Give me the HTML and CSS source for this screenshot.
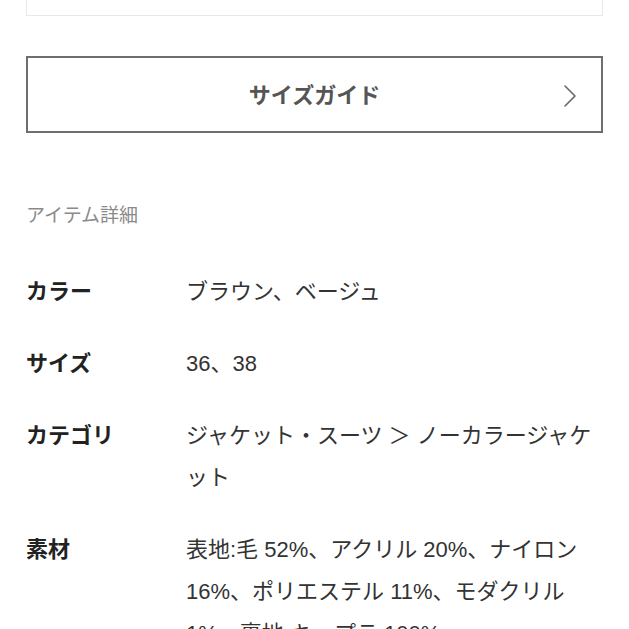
FILE: index.html
```html
<!DOCTYPE html>
<html lang="ja">
<head>
  <meta charset="UTF-8">
  <meta name="viewport" content="width=device-width, initial-scale=1.0">
  <title>アイテム詳細</title>
  <link rel="stylesheet" href="styles.css">
</head>
<body>
  <div class="page">
    <div class="card-end"></div>

    <button class="size-guide">
      <span class="size-guide-label">サイズガイド</span>
      <svg class="chevron" width="14" height="24" viewBox="0 0 14 24" fill="none">
        <path d="M2 2 L12 12 L2 22" stroke="#666" stroke-width="1.6" stroke-linecap="round" stroke-linejoin="round"/>
      </svg>
    </button>

    <h2 class="section-title">アイテム詳細</h2>

    <dl class="details">
      <div class="detail-row">
        <dt>カラー</dt>
        <dd>ブラウン、ベージュ</dd>
      </div>
      <div class="detail-row">
        <dt>サイズ</dt>
        <dd>36、38</dd>
      </div>
      <div class="detail-row">
        <dt>カテゴリ</dt>
        <dd>ジャケット・スーツ ＞ ノーカラージャケット</dd>
      </div>
      <div class="detail-row">
        <dt>素材</dt>
        <dd>表地:毛 52%、アクリル 20%、ナイロン 16%、ポリエステル 11%、モダクリル 1%、裏地:キュプラ 100%</dd>
      </div>
    </dl>
  </div>
</body>
</html>
```

FILE: styles.css
```css
body {
  margin: 0;
  background-color: #fff;
  font-family: "Liberation Sans", "Noto Sans CJK JP", sans-serif;
  color: #333;
}
.page {
  padding: 0 26px;
}
.card-end {
  height: 15px;
  border: 1px solid #e8e8e8;
  border-top: none;
}
.size-guide {
  display: flex;
  align-items: center;
  justify-content: center;
  position: relative;
  width: 100%;
  height: 77px;
  margin-top: 40px;
  padding: 0 0 3px;
  background-color: #fff;
  border: 2px solid #6e6e6e;
  font-family: inherit;
  cursor: pointer;
}
.size-guide-label {
  font-size: 22px;
  font-weight: 700;
  color: #555;
}
.chevron {
  position: absolute;
  right: 24px;
  top: 26px;
}
.section-title {
  margin: 70px 0 0;
  font-size: 19px;
  font-weight: 400;
  line-height: 26px;
  color: #8a8a8a;
}
.details {
  margin: 42px 0 0;
}
.detail-row {
  display: flex;
  margin-bottom: 30px;
}
.detail-row dt {
  width: 160px;
  flex-shrink: 0;
  font-size: 22px;
  font-weight: 700;
  line-height: 42px;
  color: #222;
}
.detail-row dd {
  flex: 1;
  margin: 0;
  font-size: 22px;
  line-height: 42px;
  color: #333;
}
```
